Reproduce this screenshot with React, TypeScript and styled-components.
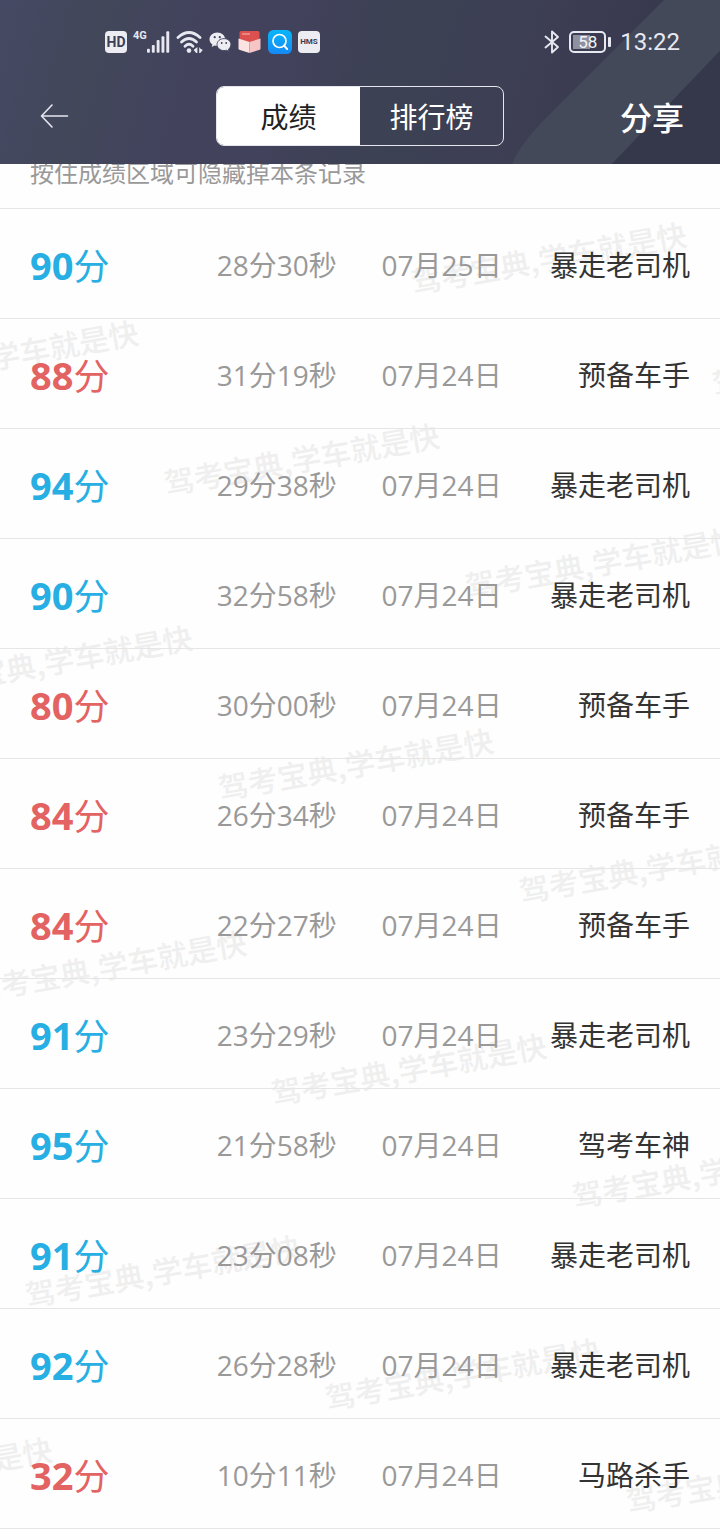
import React from "react";
import styled, { createGlobalStyle } from "styled-components";

const cjk = '"Noto Sans CJK SC", sans-serif';

const GlobalStyle = createGlobalStyle`
  * { box-sizing: border-box; }
  body {
    margin: 0;
    background: #fefefe;
    font-family: "Open Sans", ${cjk};
  }
  button {
    margin: 0;
    padding: 0;
    border: 0;
    background: none;
    font-family: ${cjk};
    cursor: pointer;
  }
`;

const Page = styled.div`
  display: flex;
  flex-direction: column;
  min-height: 100vh;
`;

const Header = styled.header`
  position: relative;
  z-index: 2;
  padding-bottom: 16px;
  background: linear-gradient(105deg, #464963 0%, #42475a 14%, #42425d 28%, #42425c 38%, #3c4153 54%, #3d3f54 70%, #3a3a50 82%, #333748 100%);
  color: #fff;
`;

const HeaderArt = styled.svg`
  position: absolute;
  top: 0;
  right: 0;
  width: 220px;
  height: 100%;
`;

const StatusBar = styled.div`
  position: relative;
  display: flex;
  align-items: center;
  justify-content: space-between;
  height: 84px;
  padding: 0 40px 0 105px;
`;

const StatusGroup = styled.div<{ $gap: number }>`
  display: flex;
  align-items: center;
  gap: ${(p) => p.$gap}px;
  svg { display: block; }
`;

const Badge = styled.span<{ $size: number }>`
  display: flex;
  align-items: center;
  justify-content: center;
  width: 22px;
  height: 22px;
  border-radius: 4px;
  background: #ececf2;
  color: #3c3e55;
  font: 700 ${(p) => p.$size}px/22px Roboto, sans-serif;
`;

const Signal = styled.span`
  display: flex;
  width: 37px;
  height: 24px;
  color: #e8e8f0;
  font: 700 11px/12px Roboto, sans-serif;
`;

const Battery = styled.span`
  display: flex;
  align-items: center;
  gap: 2px;
  &::after {
    content: "";
    width: 3px;
    height: 10px;
    border-radius: 1px;
    background: #e8e8f0;
  }
`;

const BatteryShell = styled.span`
  width: 37px;
  height: 22px;
  border: 2px solid #e8e8f0;
  border-radius: 5px;
  background: linear-gradient(#8f909f, #8f909f) 2px 2px / 17px 14px no-repeat;
  color: #f4f4f8;
  font: 400 17px/18px Roboto, sans-serif;
  text-align: center;
`;

const Clock = styled.time`
  color: #e8e8f0;
  font: 400 24px/28px Roboto, sans-serif;
`;

const NavBar = styled.nav`
  position: relative;
  display: grid;
  grid-template-columns: 1fr 288px 1fr;
  align-items: center;
  height: 64px;
  padding: 0 36px;
`;

const BackButton = styled.button`
  justify-self: start;
  width: 36px;
  height: 36px;
  svg { display: block; }
`;

const Tabs = styled.div`
  display: grid;
  grid-template-columns: 1fr 1fr;
  height: 60px;
  border: 1px solid #e6e6ee;
  border-radius: 8px;
  overflow: hidden;
`;

const Tab = styled.button<{ $active?: boolean }>`
  background: ${(p) => (p.$active ? "#fff" : "transparent")};
  color: ${(p) => (p.$active ? "#222" : "#fff")};
  font-size: 28px;
  line-height: 40px;
`;

const ShareButton = styled.button`
  justify-self: end;
  color: #fff;
  font-size: 32px;
  font-weight: 500;
  line-height: 40px;
`;

const Main = styled.main`
  position: relative;
  flex: 1;
  overflow: hidden;
`;

const Watermark = styled.span<{ $x: number; $y: number }>`
  position: absolute;
  left: ${(p) => p.$x}px;
  top: ${(p) => p.$y}px;
  color: #efefef;
  font: 500 30px/40px ${cjk};
  white-space: nowrap;
  transform: rotate(-10deg);
  pointer-events: none;
`;

const Hint = styled.p`
  position: relative;
  margin: 0;
  padding: 0 30px 26px;
  border-bottom: 1px solid #e6e6e6;
  color: #999;
  font-size: 24px;
  line-height: 18px;
`;

const Records = styled.table`
  position: relative;
  width: 100%;
  table-layout: fixed;
  border-spacing: 0;
`;

const Cell = styled.td<{ $width: string }>`
  width: ${(p) => p.$width};
  height: 110px;
  padding: 2px 0 0;
  border-bottom: 1px solid #e6e6e6;
  color: #999;
  font-size: 28px;
  line-height: 40px;
  white-space: nowrap;
`;

const ScoreCell = styled(Cell)<{ $passed: boolean }>`
  padding: 4px 0 0 30px;
  color: ${(p) => (p.$passed ? "#27aee2" : "#e36262")};
  font-size: 36px;
  b { font-size: 38px; }
`;

const TitleCell = styled(Cell)`
  padding-right: 30px;
  color: #333;
  text-align: right;
`;

const records = [
  [90, "28分30秒", "07月25日", "暴走老司机"],
  [88, "31分19秒", "07月24日", "预备车手"],
  [94, "29分38秒", "07月24日", "暴走老司机"],
  [90, "32分58秒", "07月24日", "暴走老司机"],
  [80, "30分00秒", "07月24日", "预备车手"],
  [84, "26分34秒", "07月24日", "预备车手"],
  [84, "22分27秒", "07月24日", "预备车手"],
  [91, "23分29秒", "07月24日", "暴走老司机"],
  [95, "21分58秒", "07月24日", "驾考车神"],
  [91, "23分08秒", "07月24日", "暴走老司机"],
  [92, "26分28秒", "07月24日", "暴走老司机"],
  [32, "10分11秒", "07月24日", "马路杀手"],
] as const;

const PASS_SCORE = 90;

const watermarks = [
  [409, 73], [-139, 171], [710, 175], [162, 274], [463, 377], [-85, 476],
  [216, 579], [517, 682], [-31, 781], [269, 884], [570, 987], [23, 1086],
  [323, 1189], [-225, 1288], [624, 1292], [77, 1391],
];

const SignalBars = () => (
  <svg width="24" height="24" viewBox="0 0 24 24" fill="#e8e8f0">
    <rect x="0" y="19" width="3" height="4" rx="1" />
    <rect x="5" y="15" width="3" height="8" rx="1" />
    <rect x="10" y="10" width="3" height="13" rx="1" />
    <rect x="15" y="6" width="3" height="17" rx="1" />
    <rect x="20" y="1" width="3" height="22" rx="1" />
  </svg>
);

const WifiIcon = () => (
  <svg width="27" height="24" viewBox="0 0 27 24" fill="none" stroke="#e8e8f0" strokeWidth="2.8" strokeLinecap="round">
    <path d="M2 7.5Q13 -2.5 24 7.5" />
    <path d="M5.5 12Q13 5 20.5 12" />
    <path d="M9 16.2Q13 12.4 17 16.2" />
    <circle cx="13" cy="20.6" r="2.3" fill="#e8e8f0" stroke="none" />
    <path d="M21.4 17v6h-1.2l-2.6-3zM23.2 17v6h1l2.6-3-2.6-1.4z" fill="#e8e8f0" stroke="none" />
  </svg>
);

const ChatIcon = () => (
  <svg width="22" height="22" viewBox="0 0 22 22">
    <path d="M8.3 1.5C3.9 1.5.5 4.5.5 8.3c0 2.2 1.1 4 2.9 5.2l-.7 2.6 2.9-1.5c.9.3 1.8.4 2.8.4 4.4 0 7.8-3 7.8-6.7s-3.5-6.8-7.9-6.8z" fill="#ececf2" />
    <path d="M15 7.6c-4 0-7 2.7-7 6s3 6 7 6c.9 0 1.7-.1 2.5-.4l2.5 1.3-.6-2.2c1.5-1.1 2.5-2.8 2.5-4.7 0-3.3-3-6-6.9-6z" fill="#ececf2" stroke="#3f4259" strokeWidth=".9" />
    <g fill="#3f4259">
      <circle cx="5.7" cy="6.2" r="1.1" />
      <circle cx="10.8" cy="6.2" r="1.1" />
      <circle cx="12.7" cy="12" r=".9" />
      <circle cx="17.2" cy="12" r=".9" />
    </g>
  </svg>
);

const BoxIcon = () => (
  <svg width="25" height="24" viewBox="0 0 25 24">
    <path d="M2.500 9V2.500Q2.500 1 4 1h17Q22.500 1 22.500 2.500V9L12.500 13z" fill="#dc5150" />
    <path d="M5 4h8" stroke="#f3aaa8" strokeWidth="1.2" />
    <path d="M1.500 8.500l11 3.500v11L3 20Q1.500 19.500 1.500 18.500z" fill="#fbe3e2" />
    <path d="M23.500 8.500L12.500 12v11L22 20q1.500-.5 1.500-1.500z" fill="#f5c6c5" />
  </svg>
);

const SearchIcon = () => (
  <svg width="24" height="24" viewBox="0 0 24 24">
    <defs>
      <linearGradient id="searchFill" x1="0" y1="0" x2="0" y2="1">
        <stop offset="0" stopColor="#08b6fa" />
        <stop offset="1" stopColor="#1689f5" />
      </linearGradient>
    </defs>
    <rect width="24" height="24" rx="5.5" fill="url(#searchFill)" />
    <circle cx="11.5" cy="11" r="6.5" fill="none" stroke="#fff" strokeWidth="1.7" />
    <path d="M16 15.5l3.2 3.6" stroke="#fff" strokeWidth="1.9" strokeLinecap="round" />
  </svg>
);

const BluetoothIcon = () => (
  <svg width="16" height="24" viewBox="0 0 16 24" fill="none" stroke="#e8e8f0" strokeWidth="1.9" strokeLinecap="round" strokeLinejoin="round">
    <path d="M1.5 6.5L14 17l-6 5.500v-21L14 7 1.5 17.5" />
  </svg>
);

export default function App() {
  return (
    <Page>
      <GlobalStyle />
      <Header>
        <HeaderArt viewBox="0 0 220 164" preserveAspectRatio="none" aria-hidden="true">
          <path d="M164 0H220V51L112 164H12Q20 145 42 122z" fill="#434959" />
          <path d="M220 51L112 164H220z" fill="#34384a" />
        </HeaderArt>
        <StatusBar>
          <StatusGroup $gap={6}>
            <Badge $size={14}>HD</Badge>
            <Signal>
              4G
              <SignalBars />
            </Signal>
            <WifiIcon />
            <ChatIcon />
            <BoxIcon />
            <SearchIcon />
            <Badge $size={8}>HMS</Badge>
          </StatusGroup>
          <StatusGroup $gap={9}>
            <BluetoothIcon />
            <Battery>
              <BatteryShell>58</BatteryShell>
            </Battery>
            <Clock>13:22</Clock>
          </StatusGroup>
        </StatusBar>
        <NavBar>
          <BackButton aria-label="返回">
            <svg width="36" height="36" viewBox="0 0 36 36" fill="none" stroke="#e6e6ee" strokeWidth="1.6" strokeLinecap="round" strokeLinejoin="round">
              <path d="M31.5 18H5.5M16 7L5.5 18L16 29" />
            </svg>
          </BackButton>
          <Tabs role="tablist">
            <Tab role="tab" aria-selected="true" $active>成绩</Tab>
            <Tab role="tab" aria-selected="false">排行榜</Tab>
          </Tabs>
          <ShareButton>分享</ShareButton>
        </NavBar>
      </Header>
      <Main>
        {watermarks.map(([x, y]) => (
          <Watermark key={`${x},${y}`} $x={x} $y={y} aria-hidden="true">
            驾考宝典,学车就是快
          </Watermark>
        ))}
        <Hint>按住成绩区域可隐藏掉本条记录</Hint>
        <Records>
          <tbody>
            {records.map(([score, duration, date, title], i) => (
              <tr key={i}>
                <ScoreCell $width="30.1%" $passed={score >= PASS_SCORE}>
                  <b>{score}</b>分
                </ScoreCell>
                <Cell $width="22.9%">{duration}</Cell>
                <Cell $width="18%">{date}</Cell>
                <TitleCell $width="29%">{title}</TitleCell>
              </tr>
            ))}
          </tbody>
        </Records>
      </Main>
    </Page>
  );
}
